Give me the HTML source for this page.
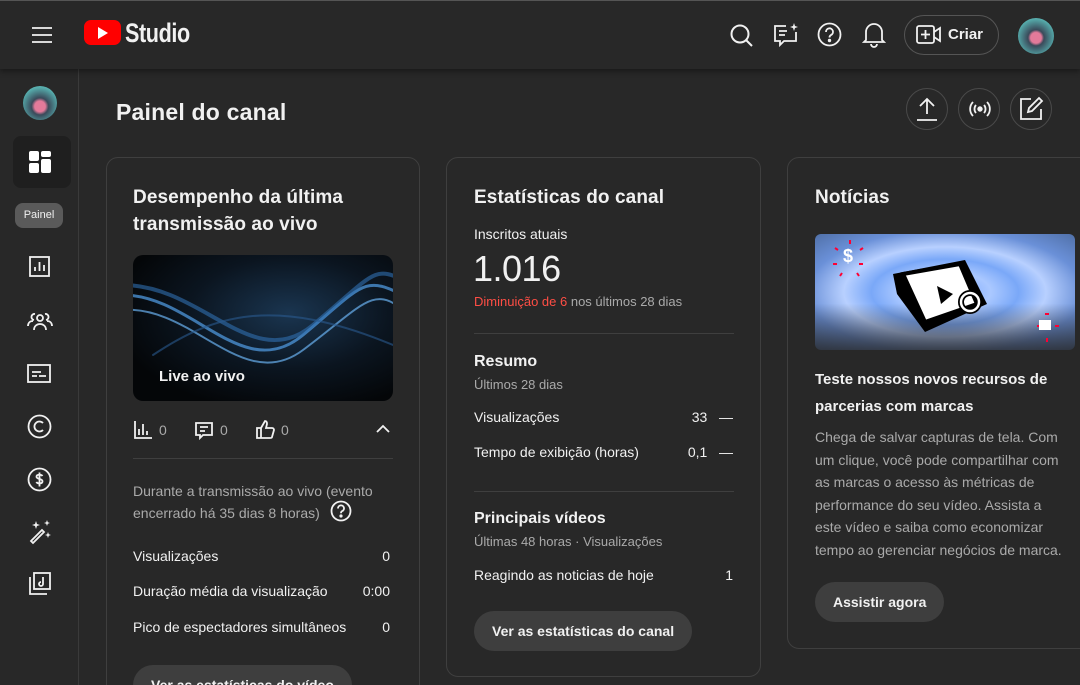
<!DOCTYPE html><html><head><meta charset="utf-8"><style>
*{box-sizing:border-box;margin:0;padding:0}
html,body{width:1080px;height:685px;overflow:hidden}
body{background:#282828;font-family:"Liberation Sans",Roboto,sans-serif;color:#f1f1f1;position:relative}
.hdr{position:absolute;left:0;top:0;width:1080px;height:69px;background:#282828;border-top:1px solid #555;box-shadow:0 2px 6px rgba(0,0,0,.45);z-index:2}
.side{position:absolute;left:0;top:69px;width:79px;height:616px;border-right:1px solid #3a3a3a}
.abs{position:absolute}
.card{position:absolute;border:1px solid #3f3f3f;border-radius:12px;background:#282828}
h1{position:absolute;left:116px;top:99px;font-size:23px;font-weight:bold;letter-spacing:.2px}
.t{font-size:19px;font-weight:bold;line-height:27px;letter-spacing:.1px}
.s{font-size:14px}
.g{color:#aaa}
.row{position:absolute;font-size:14px;display:flex;justify-content:space-between}
.btn{position:absolute;background:#3e3e3e;border-radius:20px;height:40px;font-size:14px;font-weight:bold;line-height:40px;padding:0 18px}
.circ{position:absolute;top:88px;width:42px;height:42px;border:1px solid #4a4a4a;border-radius:50%}
svg{position:absolute}
.ic{fill:none;stroke:#f1f1f1;stroke-width:1.8}
hr{position:absolute;border:0;border-top:1px solid #3f3f3f}
</style></head><body>
<div class="hdr">
<svg style="left:31px;top:25px" width="22" height="18" class="ic"><path d="M1 2h20M1 9h20M1 16h20"/></svg>
<svg style="left:84px;top:19px" width="38" height="26"><rect width="37" height="25" rx="7" fill="#f00"/><path d="M14 7l10 6-10 6z" fill="#fff"/></svg>
<div class="abs" style="left:125px;top:17px;font-size:27px;font-weight:bold;letter-spacing:-.5px;transform:scaleX(.8);transform-origin:left">Studio</div>
<svg style="left:729px;top:22px" width="26" height="26" class="ic"><circle cx="11" cy="11" r="8.5" stroke-width="2"/><path d="M17 17l6 6" stroke-width="2"/></svg>
<svg style="left:772px;top:20px" width="28" height="28" class="ic"><path d="M14 5H3v15h5v4l4-4h12v-9"/><path d="M7 10h8M7 14h6"/><path d="M22 2l1 3 3 1-3 1-1 3-1-3-3-1 3-1z" fill="#f1f1f1" stroke="none"/></svg>
<svg style="left:817px;top:21px" width="26" height="26" class="ic"><circle cx="12.5" cy="12.5" r="11"/><path d="M9 10a3.5 3.5 0 1 1 5 3c-1 .6-1.5 1.2-1.5 2.5"/><circle cx="12.5" cy="18.5" r=".8" fill="#f1f1f1"/></svg>
<svg style="left:862px;top:20px" width="24" height="28" class="ic"><path d="M4 19V11a8 8 0 0 1 16 0v8l2 2H2z M9 23a3 3 0 0 0 6 0"/></svg>
<div class="abs" style="left:904px;top:14px;width:95px;height:40px;border:1px solid #555;border-radius:20px"></div>
<svg style="left:916px;top:24px" width="26" height="20" class="ic"><rect x="1" y="1" width="17" height="17" rx="2"/><path d="M9.5 5v9M5 9.5h9M18 7l6-4v13l-6-4"/></svg>
<div class="abs" style="left:948px;top:25px;font-size:15px;font-weight:bold">Criar</div>
<div class="abs" style="left:1018px;top:17px;width:36px;height:36px;border-radius:50%;background:radial-gradient(circle at 50% 55%,#e37a9a 0,#e37a9a 20%,#3a4a5a 30%,#5aa 70%,#7cc 100%)"></div>
</div>
<div class="side">
<div class="abs" style="left:23px;top:17px;width:34px;height:34px;border-radius:50%;background:radial-gradient(circle at 50% 60%,#e37a9a 0,#e37a9a 20%,#3a4a5a 32%,#5aa 70%,#7cc 100%)"></div>
<div class="abs" style="left:13px;top:67px;width:58px;height:52px;border-radius:8px;background:#1f1f1f"></div>
<svg style="left:29px;top:82px" width="24" height="24"><rect x="0" y="0" width="10" height="10" rx="2" fill="#fff"/><rect x="12" y="0" width="10" height="6" rx="2" fill="#fff"/><rect x="0" y="12" width="10" height="10" rx="2" fill="#fff"/><rect x="12" y="8" width="10" height="14" rx="2" fill="#fff"/></svg>
<div class="abs" style="left:15px;top:134px;width:48px;height:25px;border-radius:8px;background:#5a5a5a;font-size:11px;line-height:25px;text-align:center">Painel</div>
<svg style="left:28px;top:186px" width="24" height="24" class="ic"><rect x="2" y="2" width="19" height="19"/><path d="M7 16v-4M11.5 16V7M16 16v-6"/></svg>
<svg style="left:26px;top:240px" width="28" height="24" class="ic"><circle cx="14" cy="9" r="3"/><path d="M8 21c0-4 3-6 6-6s6 2 6 6M9 5a3 3 0 1 0-1 6M19 5a3 3 0 1 1 1 6M2 17c0-3 2-5 5-5M26 17c0-3-2-5-5-5"/></svg>
<svg style="left:27px;top:294px" width="26" height="22" class="ic"><rect x="1" y="2" width="22" height="17"/><path d="M5 13h5M12 13h7M5 9h9"/></svg>
<svg style="left:27px;top:345px" width="26" height="26" class="ic"><circle cx="12.5" cy="12.5" r="11"/><path d="M16 9a5 5 0 1 0 0 7"/></svg>
<svg style="left:27px;top:398px" width="26" height="26" class="ic"><circle cx="12.5" cy="12.5" r="11"/><path d="M15.5 9c-1-1.5-6-2-6 .8s6 1.5 6 4.4-5 2.7-6.2.8M12.5 5.5v14"/></svg>
<svg style="left:28px;top:450px" width="26" height="26" class="ic"><path d="M3 22l11-11 2 2-11 11z"/><path d="M8 2l1 3 3 1-3 1-1 3-1-3-3-1 3-1zM19 1l.8 2.2 2.2.8-2.2.8L19 7l-.8-2.2L16 4l2.2-.8zM20 13l.8 2.2 2.2.8-2.2.8-.8 2.2-.8-2.2L17 16l2.2-.8z" fill="#f1f1f1" stroke="none"/></svg>
<svg style="left:28px;top:503px" width="24" height="24" class="ic"><rect x="6" y="1" width="16" height="16"/><path d="M2 5v17h17"/><path d="M15 5v7a2 2 0 1 1-2-2" /></svg>
</div>
<h1>Painel do canal</h1>
<div class="circ" style="left:906px"></div><div class="circ" style="left:958px"></div><div class="circ" style="left:1010px"></div>
<svg style="left:915px;top:96px" width="24" height="26" class="ic" stroke-width="2"><path d="M12 18V3M5 10l7-7 7 7M2 24h20"/></svg>
<svg style="left:966px;top:98px" width="28" height="22" class="ic"><path d="M7 4a10 10 0 0 0 0 14M21 4a10 10 0 0 1 0 14M10 7a6 6 0 0 0 0 8M18 7a6 6 0 0 1 0 8"/><circle cx="14" cy="11" r="1.8" fill="#f1f1f1"/></svg>
<svg style="left:1019px;top:96px" width="26" height="26" class="ic"><path d="M12 3H2v20h20V13"/><path d="M9 16l1-4L20 2l3 3-10 10z"/></svg>

<div class="card" style="left:106px;top:157px;width:314px;height:560px">
<div class="abs t" style="left:26px;top:26px">Desempenho da última<br>transmissão ao vivo</div>
<div class="abs" style="left:26px;top:97px;width:260px;height:146px;border-radius:10px;overflow:hidden;background:radial-gradient(ellipse at 60% 40%,#1a3550 0,#0b1520 45%,#040608 80%)">
<svg style="left:0;top:0" width="260" height="146"><g fill="none" stroke-linecap="round"><path d="M-10 40C60 40 110 130 170 80S230 20 270 40" stroke="#4a8fd0" stroke-width="3" opacity=".8"/><path d="M-10 55C60 50 110 140 170 95S240 30 270 55" stroke="#6ab0f0" stroke-width="2" opacity=".7"/><path d="M-10 30C70 30 120 120 180 70S240 10 270 25" stroke="#3070b0" stroke-width="4" opacity=".6"/><path d="M20 100C80 60 140 40 260 90" stroke="#2a5a90" stroke-width="2" opacity=".6"/></g></svg>
<div class="abs" style="left:26px;top:113px;font-size:15px;font-weight:bold">Live ao vivo</div></div>
<svg style="left:26px;top:262px" width="20" height="20" class="ic" stroke-width="1.6"><path d="M2 1v17h17M6 15V9M10 15V4M14 15v-4"/></svg>
<div class="abs s g" style="left:52px;top:264px">0</div>
<svg style="left:87px;top:263px" width="20" height="20" class="ic" stroke-width="1.6"><path d="M2 2h16v12H9l-3 3v-3H2z M6 6h8M6 10h5"/></svg>
<div class="abs s g" style="left:113px;top:264px">0</div>
<svg style="left:148px;top:262px" width="22" height="20" class="ic" stroke-width="1.6"><path d="M2 8h4v10H2zM6 8l4-7c2 0 2 2 2 3l-1 4h6c2 0 2 2 2 2l-2 7c0 1-1 1-2 1H6"/></svg>
<div class="abs s g" style="left:174px;top:264px">0</div>
<svg style="left:268px;top:265px" width="16" height="12" class="ic" stroke-width="2"><path d="M2 9l6-6 6 6"/></svg>
<hr style="left:26px;top:300px;width:260px">
<div class="abs s g" style="left:26px;top:322px;line-height:22px;width:260px">Durante a transmissão ao vivo (evento<br>encerrado há 35 dias 8 horas)</div>
<svg style="left:223px;top:342px" width="22" height="22" class="ic" stroke-width="1.8"><circle cx="11" cy="11" r="9.5"/><path d="M8 8.5a3 3 0 1 1 4 2.7c-.8.4-1 1-1 2"/><circle cx="11" cy="16" r=".7" fill="#f1f1f1"/></svg>
<div class="row" style="left:26px;top:390px;width:257px"><span>Visualizações</span><span>0</span></div>
<div class="row" style="left:26px;top:425px;width:257px"><span>Duração média da visualização</span><span>0:00</span></div>
<div class="row" style="left:26px;top:461px;width:257px"><span>Pico de espectadores simultâneos</span><span>0</span></div>
<div class="btn" style="left:26px;top:507px">Ver as estatísticas do vídeo</div>
</div>

<div class="card" style="left:446px;top:157px;width:315px;height:520px">
<div class="abs t" style="left:27px;top:26px">Estatísticas do canal</div>
<div class="abs s" style="left:27px;top:68px">Inscritos atuais</div>
<div class="abs" style="left:26px;top:90px;font-size:36px;letter-spacing:-.5px">1.016</div>
<div class="abs" style="left:27px;top:136px;font-size:13px"><span style="color:#ff4e45">Diminuição de 6</span> <span class="g">nos últimos 28 dias</span></div>
<hr style="left:27px;top:175px;width:260px">
<div class="abs" style="left:27px;top:195px;font-size:16px;font-weight:bold">Resumo</div>
<div class="abs g" style="left:27px;top:219px;font-size:13px">Últimos 28 dias</div>
<div class="row" style="left:27px;top:251px;width:259px"><span>Visualizações</span><span>33&nbsp;&nbsp; —</span></div>
<div class="row" style="left:27px;top:286px;width:259px"><span>Tempo de exibição (horas)</span><span>0,1&nbsp;&nbsp; —</span></div>
<hr style="left:27px;top:333px;width:260px">
<div class="abs" style="left:27px;top:352px;font-size:16px;font-weight:bold">Principais vídeos</div>
<div class="abs g" style="left:27px;top:376px;font-size:13px">Últimas 48 horas · Visualizações</div>
<div class="row" style="left:27px;top:409px;width:259px"><span>Reagindo as noticias de hoje</span><span>1</span></div>
<div class="btn" style="left:27px;top:453px">Ver as estatísticas do canal</div>
</div>

<div class="card" style="left:787px;top:157px;width:320px;height:492px">
<div class="abs t" style="left:27px;top:26px">Notícias</div>
<div class="abs" style="left:27px;top:76px;width:260px;height:116px;border-radius:6px;overflow:hidden;background:linear-gradient(180deg,rgba(40,40,40,0) 60%,rgba(40,40,40,.8)),radial-gradient(ellipse at 50% 50%,#6ea0ff 0,#aac8ff 25%,#7aa8f8 40%,#b8d0ff 55%,#6a90d8 75%,#5070a8 100%)">
<svg style="left:0;top:0" width="260" height="116"><polygon points="78,40 150,26 172,70 110,98 82,60" fill="#000"/><polygon points="88,40 145,30 162,70 110,88" fill="#fff" stroke="#000" stroke-width="4"/><polygon points="122,52 138,60 126,70" fill="#000"/><circle cx="155" cy="68" r="9" fill="none" stroke="#000" stroke-width="6"/><circle cx="155" cy="68" r="9" fill="none" stroke="#fff" stroke-width="2.5"/><text x="28" y="28" fill="#fff" font-size="18" font-weight="bold" font-family="Liberation Sans">$</text><g stroke="#f03" stroke-width="2"><path d="M35 6v4M20 14l3 2M48 14l-3 2M18 30h4M48 30h-4M25 42l2-3M44 42l-2-3M230 80h4M222 92h4M240 92h4M232 104v4"/></g><rect x="224" y="86" width="12" height="10" fill="#fff"/></svg></div>
<div class="abs" style="left:27px;top:208px;font-size:15px;font-weight:bold;line-height:27px">Teste nossos novos recursos de<br>parcerias com marcas</div>
<div class="abs g" style="left:27px;top:268px;font-size:14px;line-height:22.5px">Chega de salvar capturas de tela. Com<br>um clique, você pode compartilhar com<br>as marcas o acesso às métricas de<br>performance do seu vídeo. Assista a<br>este vídeo e saiba como economizar<br>tempo ao gerenciar negócios de marca.</div>
<div class="btn" style="left:27px;top:424px">Assistir agora</div>
</div>
</body></html>
